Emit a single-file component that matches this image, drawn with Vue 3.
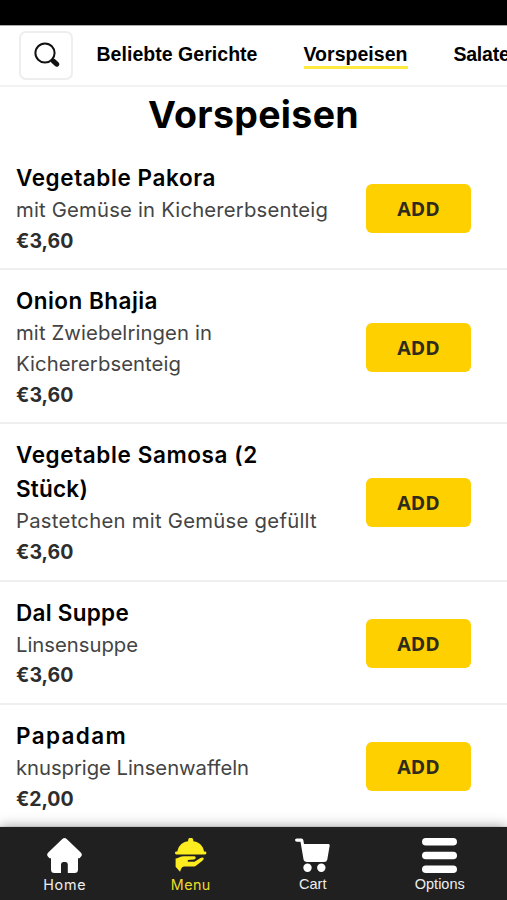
<script setup>
const categories = [
  { label: 'Beliebte Gerichte', width: 161 },
  { label: 'Vorspeisen', width: 104, active: true },
  { label: 'Salate', width: 56 },
]

const dishes = [
  {
    name: [['Vegetable Pakora', 200]],
    text: [['mit Gemüse in Kichererbsenteig', 312]],
    price: '€3,60',
  },
  {
    name: [['Onion Bhajia', 142]],
    text: [['mit Zwiebelringen in', 196], ['Kichererbsenteig', 165]],
    price: '€3,60',
  },
  {
    name: [['Vegetable Samosa (2', 242], ['Stück)', 72]],
    text: [['Pastetchen mit Gemüse gefüllt', 301]],
    price: '€3,60',
  },
  {
    name: [['Dal Suppe', 113]],
    text: [['Linsensuppe', 122]],
    price: '€3,60',
  },
  {
    name: [['Papadam', 111]],
    text: [['knusprige Linsenwaffeln', 233]],
    price: '€2,00',
  },
]

// Tracks a line of text out or in until it has the given width.
const vFit = {
  mounted(el, { value }) {
    el.style.letterSpacing = '0px'
    const natural = el.getBoundingClientRect().width
    el.style.letterSpacing = `${(value - natural) / el.textContent.length}px`
  },
}
</script>

<template>
  <div class="screen">
    <div class="status"></div>
    <header class="bar">
      <button class="search" aria-label="Suche">
        <svg viewBox="0 0 26 26" width="26" height="26">
          <circle cx="11" cy="11" r="9.6" fill="none" stroke="#111" stroke-width="2" />
          <path d="M17.6 17.8 19 19.2" stroke="#111" stroke-width="3" />
          <path d="M19.4 19.2 22.7 22.2" stroke="#111" stroke-width="5" stroke-linecap="round" />
        </svg>
      </button>
      <nav class="tabs">
        <a v-for="c in categories" :key="c.label" class="tab" :class="{ active: c.active }"><span v-fit="c.width">{{ c.label }}</span></a>
      </nav>
    </header>

    <main class="menu">
      <h1><span v-fit="211">Vorspeisen</span></h1>
      <section v-for="d in dishes" :key="d.name[0][0]" class="dish">
        <div class="info">
          <h2><span v-for="[line, w] in d.name" :key="line" v-fit="w" class="line">{{ line }}</span></h2>
          <p><span v-for="[line, w] in d.text" :key="line" v-fit="w" class="line">{{ line }}</span></p>
          <strong><span v-fit="57.5" class="line">{{ d.price }}</span></strong>
        </div>
        <button class="add">ADD</button>
      </section>
    </main>

    <footer class="dock">
      <a class="item">
        <svg viewBox="0 0 35 35" width="35" height="35" fill="#fff">
          <path d="M15.3 1Q17.500-.8 19.700 1L34 14.800Q35.500 16.500 34.300 18.300L32.500 20.300H31V31.500Q31 35 27.500 35H20.800V26.500Q20.800 24 18.800 24H16.200Q14 24 14 26.500V35H7.500Q4 35 4 31.500V20.300H2.500L.7 18.300Q-.5 16.500 1 14.800Z" />
        </svg>
        <span v-fit="43" class="line">Home</span>
      </a>
      <a class="item current">
        <svg viewBox="0 0 35 35" width="35" height="35" fill="#fdec1f">
          <circle cx="17.700" cy="2.400" r="2.600" />
          <path d="M4.300 14.200C5 7.500 10 3 17.700 3S30.400 7.500 31.100 14.200Z" />
          <rect x="2" y="13.600" width="31.400" height="2.800" rx="1.300" />
          <path d="M2.600 20.600Q4.200 20.600 5.800 19.600 8.500 18.200 11 18.200H21.300Q23 18.400 22.700 20.100 22.400 21.300 20.800 21.500L14.800 21.900V23.700H21.500L27.500 20.100Q29.800 19 30.700 20.100 31.100 21.300 29.400 22.700L23.300 27.400Q21.700 28.600 19.500 28.600H11.200Q9.200 28.600 8.300 30.400L7 33.800 2.600 28.800Z" />
        </svg>
        <span v-fit="40" class="line">Menu</span>
      </a>
      <a class="item sans">
        <svg viewBox="0 0 35 35" width="35" height="35" fill="#fff">
          <path d="M2 .5H6.500Q8 .5 8.300 2L9 6H33.500Q35 6 34.700 7.500L32.300 21.500Q31.800 24 29 24H12Q9 24 8.500 21.300L5.500 3.800H2Q0 3.800 0 2.100T2 .5Z" />
          <circle cx="12.500" cy="29.800" r="4.200" />
          <circle cx="26.300" cy="29.800" r="4.200" />
        </svg>
        <span class="line">Cart</span>
      </a>
      <a class="item sans">
        <svg viewBox="0 0 35 35" width="35" height="35" fill="#fff">
          <rect y="0" width="35" height="7.600" rx="3.800" />
          <rect y="13.700" width="35" height="7.600" rx="3.800" />
          <rect y="27.400" width="35" height="7.600" rx="3.800" />
        </svg>
        <span v-fit="50" class="line">Options</span>
      </a>
    </footer>
  </div>
</template>

<style>
body {
  margin: 0;
  background: #fff;
}
</style>

<style scoped>
.screen {
  width: 507px;
  height: 900px;
  overflow: hidden;
  display: flex;
  flex-direction: column;
  background: #fff;
  color: #000;
  font-family: Inter, "Liberation Sans", sans-serif;
}
.status {
  flex: none;
  height: 25px;
  background: #000;
}
.bar {
  flex: none;
  box-sizing: border-box;
  height: 62px;
  border-top: 1px solid #aaa;
  border-bottom: 2px solid #f2f2f2;
  padding-left: 19px;
  display: flex;
  align-items: center;
  gap: 23.500px;
  overflow: hidden;
}
.search {
  flex: none;
  box-sizing: border-box;
  width: 54px;
  height: 49px;
  margin-bottom: 10px;
  margin-top: 9px;
  padding: 0 0 0 2px;
  border: 2px solid #eee;
  border-radius: 7px;
  background: #fff;
  display: flex;
  align-items: center;
  justify-content: center;
}
.tabs {
  display: flex;
  gap: 46px;
  padding-bottom: 3px;
  font: bold 19.500px/24px "Liberation Sans", sans-serif;
  white-space: nowrap;
}
.tab {
  padding-top: 2px;
  border-bottom: 3px solid transparent;
}
.tab.active {
  border-color: #feea3e;
}
.tab span {
  display: block;
}
.menu {
  flex: 1;
  min-height: 0;
  overflow: hidden;
}
h1 {
  margin: 0;
  height: 60px;
  font-size: 37.500px;
  line-height: 55px;
  font-weight: 700;
  text-align: center;
}
h1 span {
  display: inline-block;
}
.dish {
  display: flex;
  align-items: center;
  justify-content: space-between;
  padding: 14px 36px 12px 16px;
  border-bottom: 2px solid #efefef;
}
.line {
  display: block;
  width: max-content;
  white-space: nowrap;
}
h2 {
  margin: 0;
  font-size: 22.500px;
  line-height: 34px;
  font-weight: 600;
}
p {
  margin: 0;
  font-size: 20.300px;
  line-height: 30.650px;
  color: #444;
}
strong {
  display: block;
  font-size: 19.500px;
  line-height: 30.650px;
  font-weight: 700;
  color: #2d2d2d;
}
.add {
  width: 105px;
  height: 49px;
  padding: 0;
  border: 0;
  border-radius: 6px;
  background: #ffd000;
  color: #2f2c1c;
  font: bold 19.500px "Open Sans", sans-serif;
}
.dock {
  flex: none;
  box-sizing: border-box;
  height: 73px;
  padding: 10.500px 0 0 1px;
  display: flex;
  justify-content: space-around;
  background: #202020;
  box-shadow: 0 0 12px rgba(0, 0, 0, 0.4);
  z-index: 1;
}
.item {
  display: flex;
  flex-direction: column;
  align-items: center;
  color: #eee;
  font-size: 14.300px;
  line-height: 23px;
}
.item svg {
  display: block;
}
.item.current {
  color: #eadb2b;
}
.item.sans {
  font-family: "Liberation Sans", sans-serif;
  font-size: 14.500px;
}
</style>
